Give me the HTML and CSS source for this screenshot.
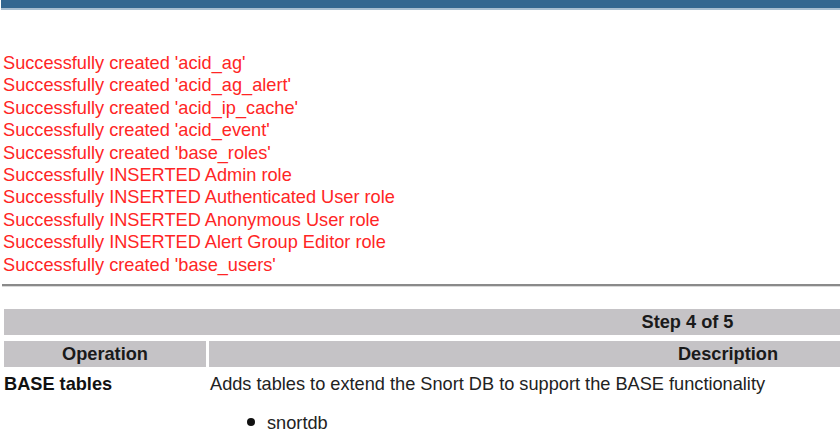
FILE: index.html
```html
<!DOCTYPE html>
<html>
<head>
<meta charset="utf-8">
<title>BASE Setup</title>
<link rel="stylesheet" href="styles.css">
</head>
<body>
<div class="topbar"></div>
<div class="messages">
  <div class="msg">Successfully created 'acid_ag'</div>
  <div class="msg">Successfully created 'acid_ag_alert'</div>
  <div class="msg">Successfully created 'acid_ip_cache'</div>
  <div class="msg">Successfully created 'acid_event'</div>
  <div class="msg">Successfully created 'base_roles'</div>
  <div class="msg">Successfully INSERTED Admin role</div>
  <div class="msg">Successfully INSERTED Authenticated User role</div>
  <div class="msg">Successfully INSERTED Anonymous User role</div>
  <div class="msg">Successfully INSERTED Alert Group Editor role</div>
  <div class="msg">Successfully created 'base_users'</div>
</div>
<hr class="rule">
<table class="setup">
  <colgroup>
    <col class="c-op">
    <col class="c-desc">
    <col class="c-status">
  </colgroup>
  <tr>
    <td class="head" colspan="3">Step 4 of 5</td>
  </tr>
  <tr>
    <td class="head">Operation</td>
    <td class="head">Description</td>
    <td class="head"></td>
  </tr>
  <tr>
    <td class="op">BASE tables</td>
    <td class="desc">Adds tables to extend the Snort DB to support the BASE functionality
      <ul class="dblist"><li>snortdb</li></ul>
    </td>
    <td class="desc"></td>
  </tr>
</table>
</body>
</html>
```

FILE: styles.css
```css
html {
  overflow: hidden;
}
body {
  margin: 0;
  padding: 0 0 0 2px;
  background: #ffffff;
  font-family: "Liberation Sans", Arial, sans-serif;
  font-size: 18.2px;
  color: #1c1c1c;
  width: 1420px;
}
.topbar {
  margin-left: -1px;
  height: 8px;
  background: #336690;
  border-bottom: 2px solid #a8bdd0;
}
.messages {
  margin-top: 42px;
  padding-left: 1px;
  color: #ff2525;
  line-height: 22.4px;
}
.rule {
  margin: 8px 0 0 0;
  height: 0;
  border: 0;
  border-top: 2px solid #8a8a8a;
  border-bottom: 1px solid #d9d9d9;
}
.setup {
  margin-top: 16px;
  width: 1373px;
  border-collapse: separate;
  border-spacing: 3px 6px;
  margin-left: -1px;
}
.c-op { width: 202px; }
.c-desc { width: 1038px; }
.head {
  background: #c5c3c6;
  font-weight: bold;
  text-align: center;
  height: 26px;
  padding: 0;
  line-height: 26px;
  color: #1a1a1a;
}
.op {
  font-weight: bold;
  vertical-align: top;
  padding: 0;
  line-height: 22px;
  color: #111;
}
.desc {
  vertical-align: top;
  padding: 0 0 0 1px;
  line-height: 22px;
  color: #222;
}
.dblist {
  margin: 17px 0 0 0;
  padding-left: 57px;
  list-style: none;
}
.dblist li::before {
  content: "";
  display: inline-block;
  width: 8px;
  height: 8px;
  border-radius: 50%;
  background: #111;
  margin-left: -20px;
  margin-right: 12px;
  vertical-align: 3px;
}
```
